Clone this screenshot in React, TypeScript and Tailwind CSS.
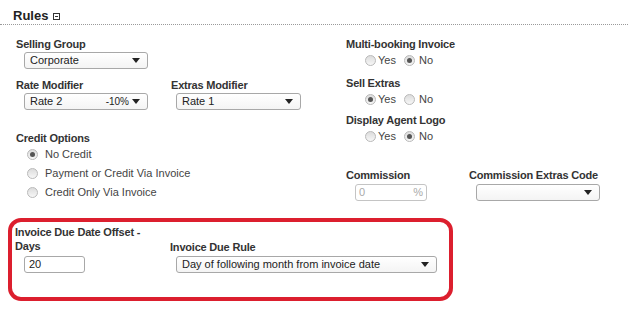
import React from 'react';

// small dropdown caret used inside select boxes
const Caret = () => (
  <svg width="8" height="5" viewBox="0 0 8 5" className="shrink-0">
    <path d="M0 0h8L4 5z" fill="#222" />
  </svg>
);

const Select = ({ value, extra, width }: { value: string; extra?: string; width: string }) => (
  <div
    className={`${width} h-[17px] flex items-center rounded-[3px] border border-[#a8a8a8] bg-gradient-to-b from-white to-[#f4f4f4] pl-[5px] pr-[7px] text-[11px] leading-none text-[#222]`}
  >
    <span className="flex-1 truncate">{value}</span>
    {extra && <span className="mr-[3px] text-[10px]">{extra}</span>}
    <Caret />
  </div>
);

const Radio = ({ checked }: { checked?: boolean }) => (
  <span className="flex h-[11px] w-[11px] shrink-0 items-center justify-center rounded-full border border-[#b9b9b9] bg-gradient-to-b from-[#dcdcdc] to-[#f7f7f7]">
    {checked && <span className="h-[5px] w-[5px] rounded-full bg-[#555]" />}
  </span>
);

const YesNo = ({ yes }: { yes: boolean }) => (
  <div className="flex h-[19px] items-center pl-[19px] text-[11px] text-[#444]">
    <Radio checked={yes} />
    <span className="ml-[2px]">Yes</span>
    <span className="ml-[8px]">
      <Radio checked={!yes} />
    </span>
    <span className="ml-[4px]">No</span>
  </div>
);

const Label = ({ children, className = '' }: { children: React.ReactNode; className?: string }) => (
  <div className={`text-[11px] font-bold leading-[13px] tracking-[-0.2px] text-[#333] ${className}`}>{children}</div>
);

export default function App() {
  return (
    <div className="relative h-[312px] w-[628px] overflow-hidden bg-white font-['Liberation_Sans',Arial,sans-serif]">
      {/* 标题 */}
      <div className="flex h-[25px] items-center border-b border-dotted border-[#9a9a9a] pl-[13px] pt-[8px]">
        <span className="text-[13px] font-bold text-[#222]">Rules</span>
        <span className="ml-[5px] flex h-[7px] w-[7px] items-center justify-center border border-[#333]">
          <span className="h-px w-[3px] bg-[#333]" />
        </span>
      </div>

      {/* 两栏 */}
      <div className="grid grid-cols-[330px_1fr] pl-[16px]">
        <div>
          <Label className="mt-[13px]">Selling Group</Label>
          <div className="ml-[8px] mt-px">
            <Select value="Corporate" width="w-[124px]" />
          </div>

          <div className="mt-[10px] grid grid-cols-[155px_1fr]">
            <div>
              <Label>Rate Modifier</Label>
              <div className="ml-[8px] mt-px">
                <Select value="Rate 2" extra="-10%" width="w-[124px]" />
              </div>
            </div>
            <div>
              <Label>Extras Modifier</Label>
              <div className="ml-[5px] mt-px">
                <Select value="Rate 1" width="w-[125px]" />
              </div>
            </div>
          </div>

          <Label className="mt-[22px]">Credit Options</Label>
          <div className="text-[11px] text-[#444]">
            {['No Credit', 'Payment or Credit Via Invoice', 'Credit Only Via Invoice'].map((o, i) => (
              <div key={o} className="flex h-[19px] items-center pl-[11px]">
                <Radio checked={i === 0} />
                <span className="ml-[7px]">{o}</span>
              </div>
            ))}
          </div>
        </div>

        <div>
          <Label className="mt-[13px]">Multi-booking Invoice</Label>
          <YesNo yes={false} />
          <Label className="mt-[7px]">Sell Extras</Label>
          <YesNo yes={true} />
          <Label className="mt-[5px]">Display Agent Logo</Label>
          <YesNo yes={false} />

          <div className="mt-[23px] grid grid-cols-[123px_1fr]">
            <div>
              <Label>Commission</Label>
              <div className="ml-[9px] mt-[2px] flex h-[17px] w-[72px] items-center justify-between rounded-[3px] border border-[#c4c4c4] px-[3px] text-[11px] text-[#aaa]">
                <span>0</span>
                <span>%</span>
              </div>
            </div>
            <div>
              <Label>Commission Extras Code</Label>
              <div className="ml-[7px] mt-[2px]">
                <Select value="" width="w-[124px]" />
              </div>
            </div>
          </div>
        </div>
      </div>

      {/* 发票规则 */}
      <div className="mt-[23px] flex items-end pl-[15px]">
        <div className="w-[155px]">
          <Label className="leading-[14px]">
            Invoice Due Date Offset -<br />
            Days
          </Label>
          <div className="ml-[9px] mt-[3px] flex h-[17px] w-[61px] items-center rounded-[3px] border border-[#a8a8a8] px-[4px] text-[11px] text-[#222]">
            20
          </div>
        </div>
        <div>
          <Label className="leading-[14px]">Invoice Due Rule</Label>
          <div className="ml-[6px] mt-[2px]">
            <Select value="Day of following month from invoice date" width="w-[261px]" />
          </div>
        </div>
      </div>

      {/* 红色标注框 */}
      <div className="pointer-events-none absolute left-[8px] top-[218px] h-[83px] w-[445px] rounded-[13px] border-[4px] border-[#dc1f2e]" />
    </div>
  );
}
